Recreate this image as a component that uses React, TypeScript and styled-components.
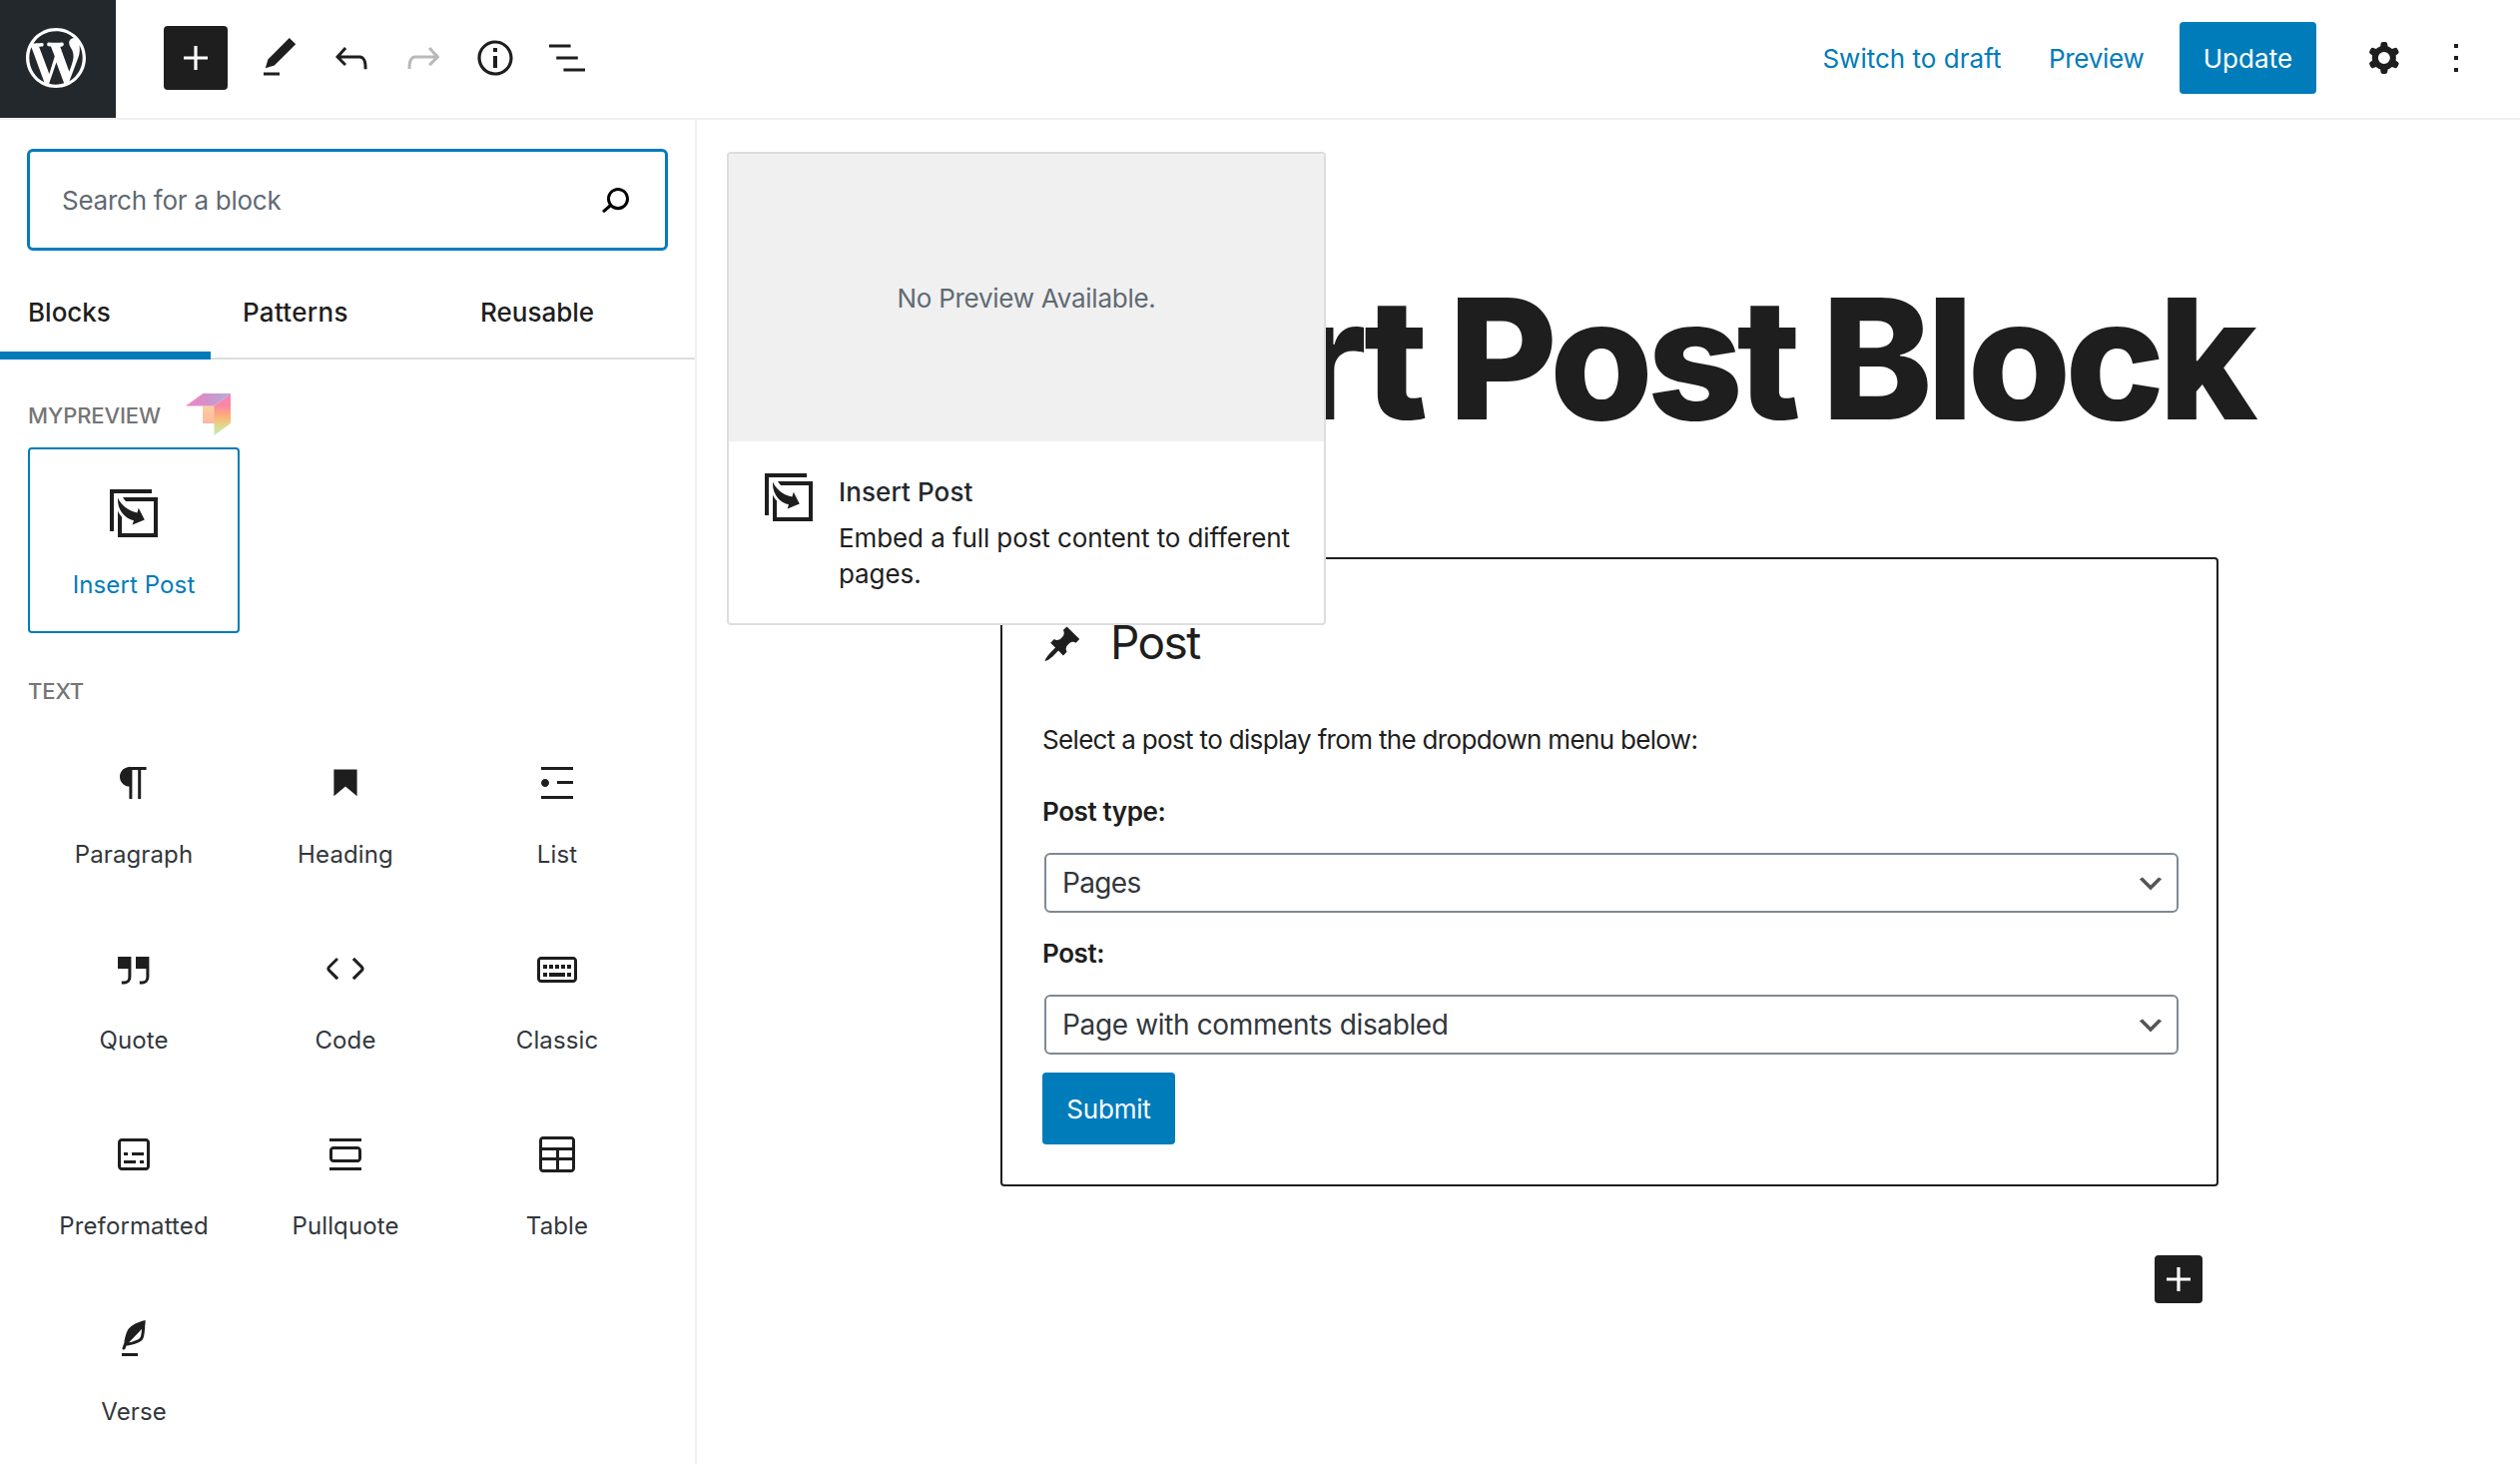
import React from 'react';
import styled, { createGlobalStyle } from 'styled-components';

const ink = '#1e1e1e';
const blue = '#007cba';

const GlobalStyle = createGlobalStyle`
  *, *::before, *::after { box-sizing: border-box; }
  body {
    margin: 0;
    background: #fff;
    color: ${ink};
    font-family: Inter, 'Liberation Sans', sans-serif;
    font-size: 26px;
    line-height: 31px;
    overflow: hidden;
  }
  button, input { font: inherit; color: inherit; }
  h1, h2, p { margin: 0; }
`;

const Page = styled.div`
  display: flex;
  flex-direction: column;
  width: 2524px;
  height: 1466px;
  overflow: hidden;
`;

/* ---------- icons ---------- */

const Svg = styled.svg<{ $size?: number }>`
  display: block;
  flex: none;
  width: ${(p) => p.$size ?? 48}px;
  height: ${(p) => p.$size ?? 48}px;
  fill: currentColor;
`;

const paths = {
  plus: 'M18 11.2h-5.2V6h-1.6v5.2H6v1.6h5.2V18h1.6v-5.2H18z',
  edit: 'M20.1 5.1L16.9 2 6.2 12.7l-1.3 4.4 4.5-1.3L20.1 5.1zM4 20.8h8v-1.5H4v1.5z',
  undo: 'M18.3 11.7c-.6-.6-1.4-.9-2.3-.9H6.7l2.9-3.3-1.1-1-4.5 5L8.5 16l1-1-2.7-2.7H16c.5 0 .9.2 1.3.5 1 1 1 3.4 1 4.5v.3h1.5v-.2c0-1.5 0-4.3-1.5-5.7z',
  redo: 'M15.6 6.5l-1.1 1 2.9 3.3H8c-.9 0-1.7.3-2.3.9-1.4 1.5-1.4 4.2-1.4 5.6v.2h1.5v-.3c0-1.1 0-3.5 1-4.5.3-.3.7-.5 1.3-.5h9.2L14.5 15l1.1 1.1 4.6-4.6-4.6-5z',
  info: 'M12 3.2c-4.8 0-8.8 3.9-8.8 8.8 0 4.8 3.9 8.8 8.8 8.8 4.8 0 8.8-3.9 8.8-8.8 0-4.8-4-8.8-8.8-8.8zm0 16c-4 0-7.2-3.3-7.2-7.2C4.8 8 8 4.8 12 4.8s7.2 3.3 7.2 7.2c0 4-3.2 7.2-7.2 7.2zM11 17h2v-6h-2v6zm0-8h2V7h-2v2z',
  outline: 'M13.8 5.2H3v1.5h10.8V5.2zm-3.6 12v1.5H21v-1.5H10.2zm7.2-6H6.6v1.5h10.8v-1.5z',
  cog: 'M10.289 4.836A1 1 0 0111.275 4h1.306a1 1 0 01.987.836l.244 1.466c.787.26 1.503.679 2.108 1.218l1.393-.522a1 1 0 011.216.437l.653 1.13a1 1 0 01-.23 1.273l-1.148.944a6.025 6.025 0 010 2.435l1.149.946a1 1 0 01.23 1.272l-.653 1.13a1 1 0 01-1.216.437l-1.394-.522c-.605.54-1.32.958-2.108 1.218l-.244 1.466a1 1 0 01-.987.836h-1.306a1 1 0 01-.986-.836l-.244-1.466a5.995 5.995 0 01-2.108-1.218l-1.394.522a1 1 0 01-1.217-.436l-.653-1.131a1 1 0 01.23-1.272l1.149-.946a6.026 6.026 0 010-2.435l-1.148-.944a1 1 0 01-.23-1.272l.653-1.131a1 1 0 011.217-.437l1.393.522a5.994 5.994 0 012.108-1.218l.244-1.466zM14.929 12a3 3 0 11-6 0 3 3 0 016 0z',
  more: 'M13 19h-2v-2h2v2zm0-6h-2v-2h2v2zm0-6h-2V5h2v2z',
  search: 'M13.5 6C10.5 6 8 8.5 8 11.5c0 1.1.3 2.1.9 3l-3.4 3 1 1.1 3.4-2.9c1 .9 2.2 1.4 3.6 1.4 3 0 5.5-2.5 5.5-5.5C19 8.5 16.5 6 13.5 6zm0 9.5c-2.2 0-4-1.8-4-4s1.8-4 4-4 4 1.8 4 4-1.8 4-4 4z',
  insertPost: 'M0 0H21V2H2V21H0zM6.5 4H24V24H4V10.8C4.5 12 5.2 13 6 13.7V22H22V6H8C7.4 5.4 6.9 4.7 6.5 4zM4 4.2C5.2 7.2 8.6 10.6 13.7 11.8L14.4 9.4 17.4 15.2 11.3 17.8 12 15.6C7.6 14.6 4 10.6 4 5.2z',
  paragraph: 'M18.3 4H9.9v-.1l-.9.2c-2.3.4-4 2.4-4 4.8s1.7 4.4 4 4.8l.7.1V20h1.5V5.5h2.9V20h1.5V5.5h2.7V4z',
  heading: 'M6.2 5.2v13.4l5.8-4.8 5.8 4.8V5.2z',
  list: 'M4 4v1.5h16V4H4zm8 8.5h8V11h-8v1.5zM4 20h16v-1.5H4V20zm4-8c0-1.1-.9-2-2-2s-2 .9-2 2 .9 2 2 2 2-.9 2-2z',
  quote: 'M13 6v6h5.2v4c0 .8-.2 1.4-.5 1.7-.6.6-1.6.6-2.5.5h-.3v1.5h.5c1 0 2.3-.1 3.3-1 .6-.6 1-1.6 1-2.8V6H13zm-9 6h5.2v4c0 .8-.2 1.4-.5 1.7-.6.6-1.6.6-2.5.5h-.3v1.5h.5c1 0 2.3-.1 3.3-1 .6-.6 1-1.6 1-2.8V6H4v6z',
  code: 'M20.8 10.7l-4.3-4.3-1.1 1.1 4.3 4.3c.1.1.1.3 0 .4l-4.3 4.3 1.1 1.1 4.3-4.3c.7-.8.7-1.9 0-2.6zM4.2 11.8l4.3-4.3-1-1-4.3 4.3c-.7.7-.7 1.8 0 2.5l4.3 4.3 1.1-1.1-4.3-4.3c-.2-.1-.2-.3-.1-.4z',
  classic: 'M20 6H4c-1.1 0-2 .9-2 2v9c0 1.1.9 2 2 2h16c1.1 0 2-.9 2-2V8c0-1.1-.9-2-2-2zm.5 11c0 .3-.2.5-.5.5H4c-.3 0-.5-.2-.5-.5V8c0-.3.2-.5.5-.5h16c.3 0 .5.2.5.5v9zM10 10H8v2h2v-2zm-5 2h2v-2H5v2zm8-2h-2v2h2v-2zm-5 6h8v-2H8v2zm6-4h2v-2h-2v2zm3 0h2v-2h-2v2zm0 4h2v-2h-2v2zM5 16h2v-2H5v2z',
  preformatted: 'M18 4H6c-1.1 0-2 .9-2 2v12c0 1.1.9 2 2 2h12c1.1 0 2-.9 2-2V6c0-1.1-.9-2-2-2zm.5 14c0 .3-.2.5-.5.5H6c-.3 0-.5-.2-.5-.5V6c0-.3.2-.5.5-.5h12c.3 0 .5.2.5.5v12zM7 16.5h6V15H7v1.5zm4-4h6V11h-6v1.5zM9 11H7v1.5h2V11zm6 5.5h2V15h-2v1.5z',
  pullquote: 'M18 8H6c-1.1 0-2 .9-2 2v4c0 1.1.9 2 2 2h12c1.1 0 2-.9 2-2v-4c0-1.1-.9-2-2-2zm.5 6c0 .3-.2.5-.5.5H6c-.3 0-.5-.2-.5-.5v-4c0-.3.2-.5.5-.5h12c.3 0 .5.2.5.5v4zM4 4v1.5h16V4H4zm0 16h16v-1.5H4V20z',
  table: 'M19 3H5c-1.1 0-2 .9-2 2v14c0 1.1.9 2 2 2h14c1.1 0 2-.9 2-2V5c0-1.1-.9-2-2-2zM5 4.5h14c.3 0 .5.2.5.5v3.5h-15V5c0-.3.2-.5.5-.5zm8 5.5h6.5v3.5H13V10zm-1.5 3.5h-7V10h7v3.5zm-7 5.5v-4h7v4.5H5c-.3 0-.5-.2-.5-.5zm14.5.5h-6V15h6.5v4c0 .3-.2.5-.5.5z',
  verse: 'M17.8 2l-.9.3c-.1 0-3.6 1-5.2 2.1C10 5.5 9.3 6.5 8.9 7.1c-.6.9-1.7 4.7-1.7 6.3l-.9 2.3c-.2.4 0 .8.4 1 .1 0 .2.1.3.1.3 0 .6-.2.7-.5l.6-1.5c.3 0 .7-.1 1.2-.2.7-.1 1.4-.3 2.2-.5.8-.2 1.6-.5 2.4-.8.7-.3 1.4-.7 1.9-1.2s.8-1.2 1-1.9c.2-.7.3-1.6.4-2.4.1-.8.1-1.7.2-2.5 0-.8.1-1.5.2-2.1V2zm-1.9 5.6c-.1.8-.2 1.5-.3 2.1-.2.6-.4 1-.6 1.3-.3.3-.8.6-1.4.9-.7.3-1.4.5-2.2.8-.6.2-1.3.3-1.8.4L15 7.5c.3-.3.6-.7 1-1.1 0 .4 0 .8-.1 1.2zM6 20h8v-1.5H6V20z',
};

type IconName = keyof typeof paths;

function Icon({ name }: { name: IconName }) {
  return (
    <Svg viewBox="0 0 24 24" aria-hidden="true">
      <path d={paths[name]} fillRule={name === 'cog' ? 'evenodd' : undefined} />
    </Svg>
  );
}

function WordPressMark() {
  return (
    <Svg $size={72} viewBox="-2 -2 24 24" aria-hidden="true">
      <path d="M20 10c0-5.51-4.49-10-10-10C4.48 0 0 4.49 0 10c0 5.52 4.48 10 10 10 5.51 0 10-4.48 10-10zM7.78 15.37L4.37 6.22c.55-.02 1.17-.08 1.17-.08.5-.06.44-1.13-.06-1.11 0 0-1.45.11-2.37.11-.18 0-.37 0-.58-.01C4.12 2.69 6.87 1.11 10 1.11c2.33 0 4.45.87 6.05 2.34-.68-.11-1.65.39-1.65 1.58 0 .74.45 1.36.9 2.1.35.61.55 1.36.55 2.46 0 1.49-1.4 5-1.4 5l-3.03-8.37c.54-.02.82-.17.82-.17.5-.05.44-1.25-.06-1.22 0 0-1.44.12-2.38.12-.87 0-2.33-.12-2.33-.12-.5-.03-.56 1.2-.06 1.22l.92.08 1.26 3.41zM17.41 10c.24-.64.74-1.87.43-4.25.7 1.29 1.05 2.71 1.05 4.25 0 3.29-1.73 6.24-4.4 7.78.97-2.59 1.94-5.2 2.92-7.78zM6.1 18.09C3.12 16.65 1.11 13.53 1.11 10c0-1.3.23-2.48.72-3.59C3.25 10.3 4.67 14.2 6.1 18.09zm4.03-6.63l2.58 6.98c-.86.29-1.76.45-2.71.45-.79 0-1.57-.11-2.29-.33.81-2.38 1.62-4.74 2.42-7.1z" />
    </Svg>
  );
}

const BrandSvg = styled.svg`
  display: block;
  width: 45px;
  height: 42px;
  margin-bottom: 2px;
`;

function MyPreviewMark() {
  return (
    <BrandSvg viewBox="0 0 45 42" aria-hidden="true">
      <defs>
        <linearGradient id="mp-top" x1="0" y1="0" x2="1" y2="0">
          <stop offset="0" stopColor="#f584bf" />
          <stop offset="0.5" stopColor="#d291cb" />
          <stop offset="1" stopColor="#a9b2da" />
        </linearGradient>
        <linearGradient id="mp-side" x1="0" y1="0" x2="0" y2="1">
          <stop offset="0" stopColor="#f487c0" />
          <stop offset="0.28" stopColor="#fa86a6" />
          <stop offset="0.55" stopColor="#fdb077" />
          <stop offset="0.78" stopColor="#dfd98f" />
          <stop offset="1" stopColor="#b9f0b6" />
        </linearGradient>
        <linearGradient id="mp-inner" x1="0" y1="0" x2="0" y2="1">
          <stop offset="0" stopColor="#fdcf9d" />
          <stop offset="1" stopColor="#fcb8a0" />
        </linearGradient>
      </defs>
      <path d="M17 12.5h12V30H17z" fill="url(#mp-inner)" />
      <path d="M0 12.5L17.3 0H45L28.5 12.5z" fill="url(#mp-top)" />
      <path d="M28.5 12.5L45 0v30L28.5 42z" fill="url(#mp-side)" />
    </BrandSvg>
  );
}

/* ---------- header ---------- */

const Header = styled.header`
  display: flex;
  align-items: flex-start;
  height: 120px;
  flex: none;
  border-bottom: 2px solid #f0f0f0;
`;

const HomeLink = styled.a`
  display: flex;
  width: 116px;
  height: 118px;
  padding: 22px 0 0 20px;
  background: #23282d;
  color: #fff;
`;

const HeaderGroup = styled.div<{ $end?: boolean }>`
  display: flex;
  align-items: center;
  height: 116px;
  ${(p) => (p.$end ? 'margin-left: auto; padding-right: 28px;' : 'padding-left: 48px;')}
`;

const InserterToggle = styled.button<{ $size: number }>`
  display: flex;
  align-items: center;
  justify-content: center;
  flex: none;
  width: ${(p) => p.$size}px;
  height: ${(p) => p.$size}px;
  padding: 0;
  border: 0;
  border-radius: 4px;
  background: ${ink};
  color: #fff;
`;

const ToolButtons = styled.div`
  display: flex;
  margin-left: 16px;
`;

const ToolButton = styled.button`
  display: flex;
  align-items: center;
  justify-content: center;
  width: 72px;
  height: 72px;
  padding: 0;
  border: 0;
  background: none;
  color: ${ink};
  &:disabled { color: #b9b9b9; }
`;

const LinkButton = styled.button<{ $gap: number; $track: number }>`
  padding: 1px 0 0;
  margin-right: ${(p) => p.$gap}px;
  border: 0;
  background: none;
  color: ${blue};
  letter-spacing: ${(p) => p.$track}px;
`;

const PrimaryButton = styled.button<{ $width: number; $track?: number }>`
  display: block;
  width: ${(p) => p.$width}px;
  height: 72px;
  padding: 21px 0 20px;
  border: 0;
  border-radius: 4px;
  background: ${blue};
  color: #fff;
  text-align: center;
  line-height: 31px;
  letter-spacing: ${(p) => p.$track ?? 0}px;
`;

const HeaderActions = styled.div`
  display: flex;
  margin-left: 32px;
`;

/* ---------- inserter sidebar ---------- */

const Body = styled.div`
  display: flex;
  flex: 1;
  min-height: 0;
`;

const Sidebar = styled.aside`
  flex: none;
  width: 698px;
  border-right: 2px solid #f0f0f0;
`;

const SearchBox = styled.label`
  display: flex;
  align-items: center;
  justify-content: space-between;
  width: 642px;
  height: 102px;
  margin: 29px 0 0 27px;
  padding: 0 26px 0 32px;
  border: 3px solid ${blue};
  border-radius: 6px;
  color: #000;
`;

const SearchInput = styled.input`
  flex: 1;
  height: 31px;
  margin-top: 1px;
  padding: 0;
  border: 0;
  outline: 0;
  background: none;
  letter-spacing: -0.25px;
  &::placeholder { color: #606a73; opacity: 1; }
`;

const Tabs = styled.div`
  display: flex;
  height: 96px;
  margin-top: 13px;
  box-shadow: inset 0 -2px 0 #ddd;
`;

const Tab = styled.button<{ $active?: boolean; $width: number; $pad: number; $track?: number }>`
  width: ${(p) => p.$width}px;
  padding: 33px 0 32px ${(p) => p.$pad}px;
  border: 0;
  background: none;
  box-shadow: ${(p) => (p.$active ? `inset 0 -8px 0 ${blue}` : 'none')};
  font-weight: 500;
  letter-spacing: ${(p) => p.$track ?? 0}px;
  text-align: left;
`;

const PanelHeader = styled.div<{ $height: number; $top: number }>`
  display: flex;
  align-items: center;
  gap: 25px;
  height: ${(p) => p.$height}px;
  padding: ${(p) => p.$top}px 28px 0;
`;

const PanelTitle = styled.h2`
  color: #757575;
  font-size: 22px;
  font-weight: 500;
  line-height: 26px;
  letter-spacing: -0.12px;
  text-transform: uppercase;
`;

const BlockGrid = styled.div`
  display: grid;
  grid-template-columns: repeat(3, 212px);
  grid-auto-rows: 186px;
  padding-left: 28px;
`;

const BlockItem = styled.button<{ $selected?: boolean }>`
  display: flex;
  flex-direction: column;
  align-items: center;
  justify-content: flex-start;
  gap: 33px;
  padding: 40px 0 0;
  border: 2px solid ${(p) => (p.$selected ? blue : 'transparent')};
  border-radius: 4px;
  background: none;
  color: ${ink};
`;

const BlockLabel = styled.span<{ $selected?: boolean }>`
  color: ${(p) => (p.$selected ? blue : '#32373c')};
  font-size: 24px;
  line-height: 29px;
  letter-spacing: 0.12px;
`;

const textBlocks: { icon: IconName; label: string }[] = [
  { icon: 'paragraph', label: 'Paragraph' },
  { icon: 'heading', label: 'Heading' },
  { icon: 'list', label: 'List' },
  { icon: 'quote', label: 'Quote' },
  { icon: 'code', label: 'Code' },
  { icon: 'classic', label: 'Classic' },
  { icon: 'preformatted', label: 'Preformatted' },
  { icon: 'pullquote', label: 'Pullquote' },
  { icon: 'table', label: 'Table' },
  { icon: 'verse', label: 'Verse' },
];

/* ---------- canvas ---------- */

const Canvas = styled.main`
  position: relative;
  flex: 1;
  display: flex;
  flex-direction: column;
`;

const PostTitle = styled.h1`
  margin-top: 155px;
  padding-right: 269px;
  font-size: 168px;
  font-weight: 800;
  line-height: 168px;
  letter-spacing: -6.4px;
  word-spacing: -3.5px;
  text-align: right;
  white-space: nowrap;
`;

const Placeholder = styled.section`
  width: 1220px;
  height: 630px;
  margin: 115px 0 0 304px;
  padding: 56px 36px 0 40px;
  border: 2px solid ${ink};
  border-radius: 4px;
`;

const PlaceholderTitle = styled.h2`
  display: flex;
  align-items: center;
  gap: 28px;
  height: 54px;
  font-size: 46px;
  font-weight: 400;
  line-height: 56px;
  letter-spacing: -1.6px;
`;

const PinSvg = styled(Svg)`
  margin-top: 3px;
`;

const Instructions = styled.p`
  margin: 52px 0 38px;
  line-height: 37px;
  letter-spacing: -0.67px;
`;

const Field = styled.div`
  display: flex;
  flex-direction: column;
  margin-bottom: 25px;
`;

const FieldLabel = styled.span`
  font-weight: 600;
  letter-spacing: -0.4px;
`;

const SelectBox = styled.div`
  display: flex;
  align-items: center;
  justify-content: space-between;
  height: 60px;
  margin: 26px 2px 0;
  padding: 0 10px 0 16px;
  border: 2px solid #7e8993;
  border-radius: 6px;
`;

const SelectValue = styled.span<{ $track: number }>`
  color: #32373c;
  font-size: 28px;
  line-height: 34px;
  letter-spacing: ${(p) => p.$track}px;
`;

const Chevron = styled(Svg)`
  margin-top: 2px;
  fill: #555;
`;

const SubmitRow = styled.div`
  margin-top: -7px;
`;

const AppenderRow = styled.div`
  display: flex;
  justify-content: flex-end;
  margin-top: 69px;
  padding-right: 318px;
`;

function SelectField({ label, value, track }: { label: string; value: string; track: number }) {
  return (
    <Field>
      <FieldLabel>{label}</FieldLabel>
      <SelectBox role="combobox" aria-label={label}>
        <SelectValue $track={track}>{value}</SelectValue>
        <Chevron $size={32} viewBox="0 0 20 20" aria-hidden="true">
          <path d="M5 6l5 5 5-5 2 1-7 7-7-7 2-1z" />
        </Chevron>
      </SelectBox>
    </Field>
  );
}

/* ---------- block preview popover ---------- */

const Popover = styled.div`
  position: absolute;
  top: 32px;
  left: 30px;
  width: 600px;
  height: 474px;
  border: 2px solid #ddd;
  border-radius: 4px;
  background: #fff;
  overflow: hidden;
`;

const PreviewArea = styled.div`
  display: flex;
  align-items: center;
  justify-content: center;
  height: 288px;
  padding-top: 1px;
  background: #f0f0f0;
  color: #606a73;
  letter-spacing: -0.26px;
`;

const BlockCard = styled.div`
  display: flex;
  gap: 26px;
  padding: 32px 28px 0 36px;
`;

const CardTitle = styled.h2`
  margin-top: 3px;
  color: #23282d;
  font-size: 26px;
  font-weight: 500;
  line-height: 31px;
  letter-spacing: 0.1px;
`;

const CardText = styled.p`
  margin-top: 12.5px;
  line-height: 36px;
  letter-spacing: -0.09px;
`;

export default function App() {
  return (
    <Page>
      <GlobalStyle />
      <Header>
        <HomeLink aria-label="View posts">
          <WordPressMark />
        </HomeLink>
        <HeaderGroup>
          <InserterToggle $size={64} aria-label="Add block">
            <Icon name="plus" />
          </InserterToggle>
          <ToolButtons>
            <ToolButton aria-label="Tools"><Icon name="edit" /></ToolButton>
            <ToolButton aria-label="Undo"><Icon name="undo" /></ToolButton>
            <ToolButton aria-label="Redo" disabled><Icon name="redo" /></ToolButton>
            <ToolButton aria-label="Details"><Icon name="info" /></ToolButton>
            <ToolButton aria-label="Outline"><Icon name="outline" /></ToolButton>
          </ToolButtons>
        </HeaderGroup>
        <HeaderGroup $end>
          <LinkButton $gap={47.5} $track={0.02}>Switch to draft</LinkButton>
          <LinkButton $gap={35.5} $track={-0.28}>Preview</LinkButton>
          <PrimaryButton $width={137} $track={0.08}>Update</PrimaryButton>
          <HeaderActions>
            <ToolButton aria-label="Settings"><Icon name="cog" /></ToolButton>
            <ToolButton aria-label="Options"><Icon name="more" /></ToolButton>
          </HeaderActions>
        </HeaderGroup>
      </Header>
      <Body>
        <Sidebar>
          <SearchBox>
            <SearchInput placeholder="Search for a block" />
            <Icon name="search" />
          </SearchBox>
          <Tabs>
            <Tab $active $width={211} $pad={28}>Blocks</Tab>
            <Tab $width={237} $pad={32} $track={0.3}>Patterns</Tab>
            <Tab $width={248} $pad={33}>Reusable</Tab>
          </Tabs>
          <PanelHeader $height={88} $top={24}>
            <PanelTitle>MyPreview</PanelTitle>
            <MyPreviewMark />
          </PanelHeader>
          <BlockGrid>
            <BlockItem $selected>
              <Icon name="insertPost" />
              <BlockLabel $selected>Insert Post</BlockLabel>
            </BlockItem>
          </BlockGrid>
          <PanelHeader $height={84} $top={32}>
            <PanelTitle>Text</PanelTitle>
          </PanelHeader>
          <BlockGrid>
            {textBlocks.map((block) => (
              <BlockItem key={block.label}>
                <Icon name={block.icon} />
                <BlockLabel>{block.label}</BlockLabel>
              </BlockItem>
            ))}
          </BlockGrid>
        </Sidebar>
        <Canvas>
          <PostTitle>Insert Post Block</PostTitle>
          <Placeholder>
            <PlaceholderTitle>
              <PinSvg $size={40} viewBox="0 0 20 20" aria-hidden="true">
                <path d="M10.44 3.02l1.82-1.82 6.36 6.35-1.83 1.82c-1.05-.68-2.48-.57-3.41.36l-.75.75c-.92.93-1.04 2.35-.35 3.41l-1.83 1.82-2.41-2.41-2.8 2.79c-.42.42-3.38 2.71-3.8 2.29s1.86-3.39 2.28-3.81l2.79-2.79L4.1 9.36l1.83-1.82c1.05.69 2.48.57 3.4-.36l.75-.75c.93-.92 1.05-2.35.36-3.41z" />
              </PinSvg>
              Post
            </PlaceholderTitle>
            <Instructions>Select a post to display from the dropdown menu below:</Instructions>
            <SelectField label="Post type:" value="Pages" track={-0.65} />
            <SelectField label="Post:" value="Page with comments disabled" track={-0.36} />
            <SubmitRow>
              <PrimaryButton $width={133} $track={-0.2}>Submit</PrimaryButton>
            </SubmitRow>
          </Placeholder>
          <AppenderRow>
            <InserterToggle $size={48} aria-label="Add block">
              <Icon name="plus" />
            </InserterToggle>
          </AppenderRow>
          <Popover>
            <PreviewArea>No Preview Available.</PreviewArea>
            <BlockCard>
              <Icon name="insertPost" />
              <div>
                <CardTitle>Insert Post</CardTitle>
                <CardText>Embed a full post content to different pages.</CardText>
              </div>
            </BlockCard>
          </Popover>
        </Canvas>
      </Body>
    </Page>
  );
}
